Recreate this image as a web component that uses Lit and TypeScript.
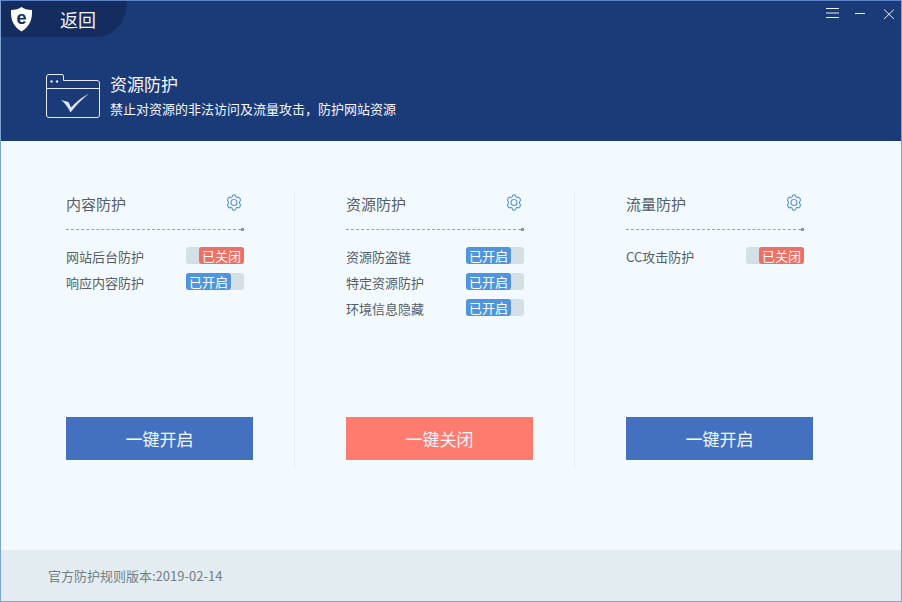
import { LitElement, html, css, svg } from "lit";
import { customElement } from "lit/decorators.js";

type Item = { name: string; on: boolean };
type Col = { title: string; items: Item[]; allOn: boolean };

const cols: Col[] = [
  { title: "内容防护", allOn: false, items: [{ name: "网站后台防护", on: false }, { name: "响应内容防护", on: true }] },
  { title: "资源防护", allOn: true, items: [{ name: "资源防盗链", on: true }, { name: "特定资源防护", on: true }, { name: "环境信息隐藏", on: true }] },
  { title: "流量防护", allOn: false, items: [{ name: "CC攻击防护", on: false }] },
];

const gear = html`<svg class="gear" width="18" height="19" viewBox="0 0 18 19" fill="none" stroke="#5b9bd5" stroke-width="1.1">
  <path d="M7.6 1.3 C8.4 .8 9.6 .8 10.4 1.3 L10.9 2.9 C11.3 3.1 11.7 3.3 12 3.6 L13.7 3.2 C14.5 3.7 15.6 5.6 15.6 6.4 L14.5 7.7 C14.6 8.2 14.6 8.8 14.5 9.3 L15.6 10.6 C15.6 11.4 14.5 13.3 13.7 13.8 L12 13.4 C11.7 13.7 11.3 13.9 10.9 14.1 L10.4 15.7 C9.6 16.2 8.4 16.2 7.6 15.7 L7.1 14.1 C6.7 13.9 6.3 13.7 6 13.4 L4.3 13.8 C3.5 13.3 2.4 11.4 2.4 10.6 L3.5 9.3 C3.4 8.8 3.4 8.2 3.5 7.7 L2.4 6.4 C2.4 5.6 3.5 3.7 4.3 3.2 L6 3.6 C6.3 3.3 6.7 3.1 7.1 2.9 Z" transform="translate(0 1)"/>
  <circle cx="9" cy="9.5" r="3"/>
</svg>`;

@customElement("app-root")
export class AppRoot extends LitElement {
  static styles = css`
    :host {
      display: block;
      width: 902px;
      height: 602px;
      font-family: "Noto Sans CJK SC", "Liberation Sans", sans-serif;
      overflow: hidden;
    }
    .win {
      box-sizing: border-box;
      width: 902px;
      height: 602px;
      border: 1px solid #7fa3d0;
      border-top-color: #5f83c9;
      display: flex;
      flex-direction: column;
      background: #f3faff;
    }
    .head {
      height: 140px;
      flex: none;
      background: #1b3a78;
      display: flex;
      flex-direction: column;
      color: #fff;
    }
    .topbar {
      height: 37px;
      flex: none;
      display: flex;
      justify-content: space-between;
    }
    .back {
      width: 126px;
      height: 36px;
      background: #142c5f;
      border-bottom-right-radius: 30px 34px;
      display: flex;
      align-items: center;
      box-sizing: border-box;
      padding-left: 9px;
      gap: 27px;
    }
    .back span {
      font-size: 18px;
      color: #f1f4fa;
      line-height: 36px;
    }
    .ctrls {
      display: flex;
      align-items: flex-start;
      gap: 16px;
      padding: 7px 6px 0 0;
    }
    .hero {
      display: flex;
      align-items: flex-start;
      padding: 34px 0 0 44px;
      gap: 9px;
    }
    .hero-txt {
      display: flex;
      flex-direction: column;
      gap: 1px;
      padding-top: 0;
    }
    .hero-title {
      font-size: 17px;
      line-height: 24px;
      color: #f4f6fb;
    }
    .hero-sub {
      font-size: 13px;
      line-height: 24px;
      color: #f4f6fb;
    }
    .main {
      flex: 1;
      display: flex;
      padding: 51px 0 0 0;
      align-items: flex-start;
    }
    .col {
      box-sizing: border-box;
      width: 280px;
      height: 277px;
      padding: 0 0 0 65px;
      display: flex;
      flex-direction: column;
      border-right: 1px solid #e6eef4;
    }
    .col.first {
      width: 294px;
    }
    .col.mid {
      padding-left: 51px;
    }
    .col.last {
      border-right: none;
      padding-left: 51px;
    }
    .col-head {
      width: 177px;
      height: 22px;
      margin-top: 0;
      display: flex;
      justify-content: space-between;
      align-items: center;
      font-size: 15px;
      color: #555d66;
    }
    .gear { margin-top: -2px; }
    .dots {
      width: 178px;
      margin-top: 14px;
      display: flex;
      align-items: center;
    }
    .dots i {
      flex: 1;
      border-top: 1px dashed #9aa3aa;
    }
    .dots b {
      width: 3px;
      height: 3px;
      background: #8c959c;
    }
    .rows {
      margin-top: 15px;
      width: 178px;
      display: flex;
      flex-direction: column;
      gap: 6px;
      height: 171px;
    }
    .row {
      height: 20px;
      display: flex;
      justify-content: space-between;
      align-items: center;
      font-size: 13px;
      color: #555d66;
    }
    .sw {
      position: relative;
      width: 58px;
      height: 17px;
      border-radius: 3px;
      background: #d5dfe6;
      display: flex;
      margin-top: -2px;
    }
    .sw.off { justify-content: flex-end; }
    .sw span {
      width: 45px;
      height: 17px;
      border-radius: 3px;
      color: #fff;
      font-size: 13px;
      line-height: 17px;
      text-align: center;
    }
    .sw.on span { background: #4e95dd; }
    .sw.off span { background: #ee6f64; }
    .btn {
      width: 187px;
      height: 43px;
      font-size: 17px;
      line-height: 43px;
      text-align: center;
      color: #f4f8ff;
    }
    .btn.open { background: #4371c0; }
    .btn.close { background: #ff7b6d; }
    .foot {
      height: 51px;
      flex: none;
      background: #e2ecf1;
      display: flex;
      align-items: center;
      padding-left: 47px;
      font-size: 13px;
      color: #757f86;
    }
  `;

  private icon() {
    return html`<svg width="56" height="48" viewBox="0 0 56 48" fill="none" style="flex:none">
      <path d="M1.5 5 Q1.5 2.5 4 2.5 H17 Q18.5 2.5 18.5 4 V8.5 H52 Q54.5 8.5 54.5 11 V43 Q54.5 45.5 52 45.5 H4 Q1.5 45.5 1.5 43 Z" stroke="#e6ebf6" stroke-width="1"/>
      <path d="M1.5 16.5 H54.5" stroke="#e6ebf6" stroke-width="1"/>
      <circle cx="6.5" cy="9.5" r="1.2" fill="#e6ebf6"/>
      <circle cx="12" cy="9.5" r="1.2" fill="#e6ebf6"/>
      <path d="M16 28 L23.5 30 L26 35.5 C31 30 37 25 44 21.5 C37.500 27 31 33 25.500 40.500 C23 35.500 20 31 16 28 Z" fill="#dfe3f2"/>
    </svg>`;
  }

  render() {
    return html`<div class="win">
      <div class="head">
        <div class="topbar">
          <div class="back">
            <svg width="23" height="26" viewBox="0 0 23 26" style="flex:none">
              <path d="M11.5 1 C14 3 17.500 4 22 4 C22.500 13 20 20.500 11.500 25.500 C3 20.500 .5 13 1 4 C5.500 4 9 3 11.500 1 Z" fill="#fff"/>
              <text x="11.500" y="18" font-size="18" font-weight="700" font-family="Liberation Sans" text-anchor="middle" fill="#142c5f">e</text>
            </svg>
            <span>返回</span>
          </div>
          <div class="ctrls">
            <svg width="13" height="10" viewBox="0 0 13 10" stroke="#e8eef8" stroke-width="1"><path d="M0 .5H13M0 5H13M0 9.500H13"/></svg>
            <svg width="10" height="10" viewBox="0 0 10 10" stroke="#e8eef8" stroke-width="1"><path d="M0 5.500H10"/></svg>
            <svg width="12" height="12" viewBox="0 0 12 12" stroke="#e8eef8" stroke-width="1" style="margin-left:2px"><path d="M1 1.500L11 11M11 1.500L1 11"/></svg>
          </div>
        </div>
        <div class="hero">
          ${this.icon()}
          <div class="hero-txt">
            <div class="hero-title">资源防护</div>
            <div class="hero-sub">禁止对资源的非法访问及流量攻击，防护网站资源</div>
          </div>
        </div>
      </div>
      <div class="main">
        ${cols.map((c, i) => html`<div class="col ${i === 0 ? "first" : i === 1 ? "mid" : "last"}">
          <div class="col-head"><span>${c.title}</span>${gear}</div>
          <div class="dots"><i></i><b></b></div>
          <div class="rows">
            ${c.items.map(it => html`<div class="row">
              <span>${it.name}</span>
              <div class="sw ${it.on ? "on" : "off"}"><span>${it.on ? "已开启" : "已关闭"}</span></div>
            </div>`)}
          </div>
          <div class="btn ${c.allOn ? "close" : "open"}">${c.allOn ? "一键关闭" : "一键开启"}</div>
        </div>`)}
      </div>
      <div class="foot">官方防护规则版本:2019-02-14</div>
    </div>`;
  }
}
